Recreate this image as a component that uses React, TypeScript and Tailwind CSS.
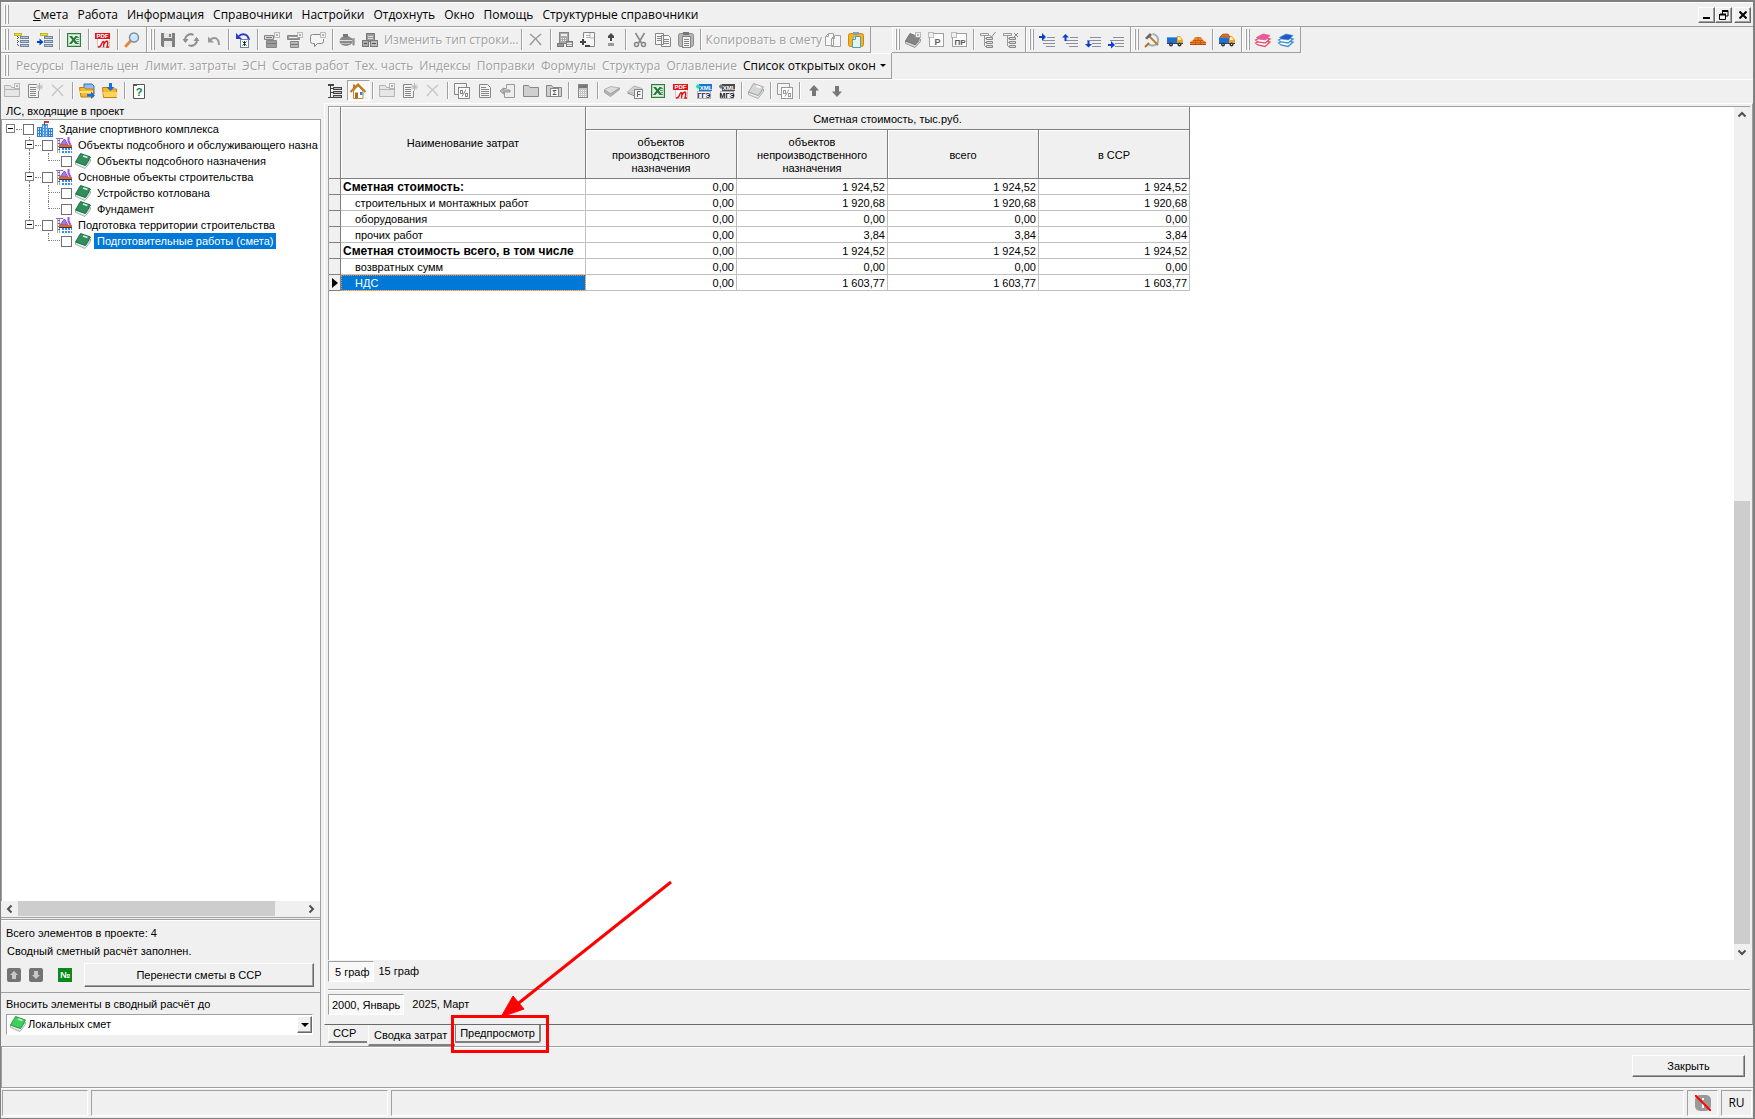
import type { ReactNode } from "react";

const G = "#868686";
const L = "#b4b4b4";

const sparkle = (
  <g stroke={L} fill="none">
    <rect x="10.5" y="0.5" width="5" height="5" fill="#f0f0f0" stroke={G} strokeDasharray="1 1" />
    <rect x="12.5" y="2.5" width="1" height="1" />
  </g>
);

const excel = (
  <>
    <rect x="1.5" y="1.5" width="13" height="13" fill="#fff" stroke="#2e7d3a" />
    <rect x="2.5" y="2.5" width="11" height="11" fill="#e3f1e5" stroke="#b9d8be" />
    <path d="M10 5.500h3M10 7.500h3M11 9.500h2M11 11.500h2" stroke="#5d9c68" />
    <path d="M3 4h3l1.700 2.300L9.500 4H12L9 7.800 12.500 12h-3l-2-2.600-2 2.600H3l3.300-4.200z" fill="#23793a" />
  </>
);

const pdf = (
  <>
    <path d="M2.500 1.500h9l3 3v11h-12z" fill="#fff" stroke="#c9c9c9" />
    <rect x="0" y="1" width="15" height="6" fill="#e3131a" />
    <text x="7.500" y="6" textAnchor="middle" fontSize="6" fontWeight="700" fontFamily="Liberation Sans, sans-serif" fill="#fff">PDF</text>
    <path d="M3 15c3 0 3-2 4-4s2-2 2 0-1 3 0 4M9 12c1-2 2-3 3-3s1 2 0 6h2" fill="none" stroke="#e3131a" strokeWidth="1.500" />
  </>
);

const xml = (band: string, dark: string, mark: string, label: string) => (
  <>
    <rect x="3" y="1" width="13" height="7" fill={band} />
    <rect x="1.5" y="8.5" width="13" height="7" fill="#f4f4f8" stroke={L} />
    <path d="M0 3.500h4M2 1.500v4" stroke={mark} strokeWidth="2" />
    <text x="10" y="6.500" textAnchor="middle" fontSize="6" fontWeight="700" fontFamily="Liberation Sans, sans-serif" fill="#fff">XML</text>
    <text x="8" y="14.500" textAnchor="middle" fontSize="7" fontWeight="700" fontFamily="Liberation Sans, sans-serif" fill={dark}>{label}</text>
  </>
);

const newDoc = (
  <>
    <path d="M10 1.500H1.500v13h10V8" fill="#f4f4f4" stroke={G} />
    <path d="M3 4.500h6M3 6.500h6M3 8.500h6M3 10.500h6M3 12.500h6" stroke={G} />
    <path d="M12.500 0v8M9 4h7M10 1.500l5 5M15 1.500l-5 5" stroke={L} />
  </>
);

const newFolder = (
  <>
    <path d="M0.500 13.500v-11h6l1 2h8v9z" fill="#e6e6e6" stroke={L} />
    <path d="M1 6.500h14" stroke={L} />
    {sparkle}
  </>
);

const cross = (c: string) => <path d="M2 2c4 3 8 7 11 11M13 2C9 5 5 9 2 13" stroke={c} strokeWidth="1.500" fill="none" />;

const book = (face: string, side: string, mark: string) => (
  <>
    <path d="M0.500 9v2.500L10 15.500l5.500-7V6l-5 6.500z" fill="#e6ecea" stroke="#93a19c" strokeWidth=".8" />
    <path d="M5.500 0.500l10 3.500-5 8.500-10-3.500z" fill={face} stroke={side} />
    <path d="M8 3l4.500 1.500" stroke={mark} strokeWidth="1.500" />
  </>
);

const stack = (top: string, side: string) => (
  <>
    <path d="M0.500 11l6-3 8.500 2-5 4.500-7-1.500z" fill="#fff" stroke={side} strokeWidth="1.300" />
    <path d="M0.500 8l6-3 8.500 2-5 4-7-1z" fill="#fff" stroke={side} strokeWidth="1.300" />
    <path d="M1.500 5.500L8 2l7 1.500L10.500 8 3.500 7z" fill={top} stroke={side} strokeWidth=".7" />
  </>
);

const treeBars = (
  <>
    <rect x="6.500" y="4.500" width="8" height="2" fill="#b9cadb" stroke="#6f849b" />
    <rect x="6.500" y="8.500" width="8" height="2" fill="#b9cadb" stroke="#6f849b" />
    <rect x="6.500" y="12.500" width="8" height="2" fill="#b9cadb" stroke="#6f849b" />
  </>
);

const lines = (first: string) => (
  <path d={first + "M4 8.500h12M4 11.500h12M7 14.500h9"} stroke="#8a8fa0" fill="none" />
);

const calc = (
  <>
    <rect x="3.500" y="1.500" width="9" height="13" fill="#c4c4c4" stroke={G} />
    <rect x="4" y="2" width="8" height="3" fill="#777" />
    <path d="M4 7.500h8M4 9.500h8M4 11.500h8M4 13.500h8" stroke="#fff" strokeDasharray="1 1" />
  </>
);

const truck = (
  <>
    <path d="M0 5h10v6H0z" fill="#1f6fd0" />
    <path d="M0 5.500h10" stroke="#5aa0ee" />
    <path d="M10 4h3l3 4v3h-6z" fill="#f1a325" />
    <path d="M11 5h2l1.500 3H11z" fill="#fbe9b8" />
    <path d="M0 11.500h16" stroke="#24486e" />
    <circle cx="4" cy="12.500" r="2" fill="#333" />
    <circle cx="12.500" cy="12.500" r="2" fill="#333" />
    <path d="M3.500 12.500h1M12 12.500h1" stroke="#ddd" />
  </>
);

const docPercent = (c: string) => (
  <>
    <path d="M4 11.500H0.500v-11h12V4" fill="#f4f4f4" stroke={c} />
    <rect x="4.500" y="4.500" width="11" height="11" fill="#fff" stroke={c} />
    <path d="M8 13.500l4-7" stroke={c} />
    <rect x="6.500" y="7.500" width="2" height="3" fill="none" stroke={c} />
    <rect x="11.500" y="10.500" width="2" height="3" fill="none" stroke={c} />
  </>
);

const icons: Record<string, ReactNode> = {
  tree: (
    <>
      {treeBars}
      <path d="M3.500 4v10M4 5.500h2M4 9.500h2M4 13.500h2" stroke="#555" strokeDasharray="1 1" />
      <rect x="0.500" y="1.500" width="7" height="2" fill="#ffe600" stroke="#a39a1a" strokeWidth=".7" />
    </>
  ),
  treeInto: (
    <>
      <g transform="translate(1 0)">{treeBars}</g>
      <rect x="3.500" y="1.500" width="7" height="2" fill="#ffe600" stroke="#a39a1a" strokeWidth=".7" />
      <path d="M0 10h4" stroke="#0044cc" strokeWidth="2" />
      <path d="M2.500 6.500L6.500 10l-4 3.500z" fill="#0044cc" />
    </>
  ),
  excel,
  pdf,
  magnifier: (
    <>
      <path d="M2 14l5-5.500" stroke="#e58a3c" strokeWidth="3" strokeLinecap="round" />
      <circle cx="10" cy="5.500" r="4.500" fill="#cfe4f8" stroke="#7d8ea5" strokeWidth="1.500" />
      <path d="M8 4.500a2.500 2.500 0 0 1 2.500-1.500" stroke="#fff" fill="none" />
    </>
  ),
  save: (
    <>
      <path d="M1 1h14v14H2.500L1 13.500z" fill="#7f7f7f" />
      <path d="M4 1h8v5H4zM4 9h8v6H4z" fill="#e6e6e6" />
      <path d="M9 2h2v3H9z" fill="#7f7f7f" />
    </>
  ),
  refresh: (
    <g fill="none" stroke="#8f8f8f" strokeWidth="2">
      <path d="M2.500 9.500a5.500 5.500 0 0 1 8-6.500M13.500 6.500a5.500 5.500 0 0 1-8 6.500" />
      <path d="M0 7l2.500 3.500L5 7M11 9l2.500-3.500L16 9" strokeWidth="1" fill="#8f8f8f" />
    </g>
  ),
  undo: (
    <>
      <path d="M4 8c4-4 9-2 9 5" fill="none" stroke="#999" strokeWidth="2" />
      <path d="M2 4.500v6h6z" fill="#999" />
    </>
  ),
  undoBlue: (
    <>
      <path d="M4 4c4-3 9-2 10 4" fill="none" stroke="#2f36c8" strokeWidth="2" />
      <path d="M1 1v6h6z" fill="#2f36c8" />
      <rect x="5.500" y="7.500" width="8" height="8" fill="#fff" stroke="#6688aa" />
      <path d="M7.500 9.500l4 4M11.500 9.500l-4 4M9.500 9v5" stroke="#333" />
    </>
  ),
  stackNew: (
    <>
      <path d="M0.500 3.500h9v4h-9z" fill="#d5d5d5" stroke={G} />
      <path d="M2.500 8.500h10v7h-10z" fill="#9b9b9b" stroke={G} />
      <path d="M2 5.500h6M3 11.500h9" stroke="#777" />
      {sparkle}
    </>
  ),
  barNew: (
    <>
      <path d="M0.500 3.500h12v4H0.500z" fill="#999" stroke={G} />
      <path d="M3.500 9.500h8v6h-8z" fill="#b7b7b7" stroke={G} />
      <path d="M2 5.500h9" stroke="#eee" />
      <path d="M4 12.500h7" stroke="#777" />
      {sparkle}
    </>
  ),
  commentNew: (
    <>
      <path d="M10 2.500H2.500q-2 0-2 2v5q0 2 2 2h2v3l3-3h4q2 0 2-2V7" fill="#f4f4f4" stroke={G} />
      {sparkle}
    </>
  ),
  barrel: (
    <>
      <ellipse cx="7" cy="9" rx="6.500" ry="5" fill="#8a8a8a" />
      <path d="M0 8.500h13" stroke="#ddd" />
      <path d="M2 11.500h9" stroke="#bbb" />
      <path d="M12 7h2v6h1V6" stroke="#777" fill="none" />
      <rect x="4" y="2" width="5" height="3" fill="#777" />
    </>
  ),
  machines: (
    <>
      <rect x="4.500" y="1.500" width="8" height="8" fill="#999" stroke="#777" />
      <path d="M6 4.500h5M6 6.500h5" stroke="#ddd" />
      <rect x="0.500" y="8.500" width="6" height="6" fill="#aaa" stroke="#777" />
      <rect x="8.500" y="8.500" width="7" height="6" fill="#bbb" stroke="#777" />
      <path d="M10 11.500h4M2 11.500h3" stroke="#555" />
    </>
  ),
  cross: cross("#999"),
  crossLight: cross("#c6c6c6"),
  calcDb: (
    <>
      <rect x="2.500" y="0.500" width="9" height="11" fill="#aaa" stroke={G} />
      <path d="M4 3h6" stroke="#eee" strokeWidth="2" />
      <path d="M4 6.500h6M4 8.500h6" stroke="#eee" strokeDasharray="1 1" />
      <rect x="0.500" y="11.500" width="6" height="3" fill="#999" stroke="#777" />
      <rect x="9.500" y="9.500" width="6" height="5" fill="#aaa" stroke="#777" />
      <path d="M10 11.500h5M10 13.500h5" stroke="#eee" />
    </>
  ),
  docPlus: (
    <>
      <path d="M3.500 6V0.500h11v14H10" fill="#f6f6f6" stroke={G} />
      <path d="M6 3.500h4M6 5.500h4M10 1v5h4" stroke={L} fill="none" />
      <path d="M0 10h6M3 7v6" stroke="#444" strokeWidth="2" />
      <path d="M5 14h5" stroke="#444" strokeWidth="2" />
    </>
  ),
  plusMinus: (
    <>
      <path d="M8 1l3 3v2H9v3H7V6H5V4z" fill="#4a4a4a" />
      <rect x="5" y="11" width="6" height="3" fill="#999" />
    </>
  ),
  scissors: (
    <g fill="none" stroke={G}>
      <path d="M3.500 1l6 10M12.500 1l-6 10" strokeWidth="1.500" />
      <circle cx="4.500" cy="12.500" r="2" strokeWidth="1.500" />
      <circle cx="11.500" cy="12.500" r="2" strokeWidth="1.500" />
    </g>
  ),
  copy: (
    <g stroke={G} fill="#f6f6f6">
      <path d="M0.500 1.500h8v11h-8zM6.500 3.500h7l2 2v9h-9z" />
      <path d="M2 4.500h4M2 6.500h4M2 8.500h4M8 7.500h6M8 9.500h6M8 11.500h6" />
    </g>
  ),
  paste: (
    <>
      <rect x="0.500" y="1.500" width="15" height="13" rx="2" fill="#b5b5b5" stroke="#8c8c8c" />
      <rect x="5" y="0" width="6" height="3" fill="#777" />
      <rect x="4.500" y="4.500" width="8" height="11" fill="#f2f2f2" stroke={G} />
      <path d="M6 7.500h5M6 9.500h5M6 11.500h5M6 13.500h5" stroke={G} />
    </>
  ),
  copyBlank: (
    <g stroke="#a2a2a2" fill="#f7f7f7">
      <path d="M3.500 1.500h5v12h-8V4.500zM9.500 3.500h6v11h-9v-8z" />
      <path d="M3.500 2v2.500H1M9.500 4v2.500H7" fill="none" />
    </g>
  ),
  pasteColor: (
    <>
      <rect x="0.500" y="1.500" width="15" height="13" rx="2" fill="#f8b21d" stroke="#c98a10" />
      <rect x="5" y="0" width="6" height="3" fill="#8aa0ae" />
      <path d="M7 4.500h5.500v11h-8V7z" fill="#dff5f8" stroke="#5f9aa6" />
      <path d="M7.500 4.500v3h-3" stroke="#5f9aa6" fill="none" />
    </>
  ),
  bookNew: (
    <>
      <path d="M0.500 9v2.500L10 15.500l5.500-6V7l-5 6z" fill="#d6d6d6" stroke="#999" />
      <path d="M5 1.500l10 4-4.500 7L0.500 9z" fill="#858585" stroke="#777" />
      {sparkle}
    </>
  ),
  boxP: (
    <>
      <rect x="1.500" y="1.500" width="14" height="13" fill="#fdfdfd" stroke="#a0a0a0" />
      <rect x="0.500" y="0.500" width="5" height="5" fill="#f0f0f0" stroke={G} strokeDasharray="1 1" />
      <text x="9.500" y="13" textAnchor="middle" fontSize="9" fontWeight="700" fontFamily="Liberation Sans, sans-serif" fill="#666">Р</text>
    </>
  ),
  boxPR: (
    <>
      <rect x="1.500" y="1.500" width="14" height="13" fill="#fdfdfd" stroke="#a0a0a0" />
      <rect x="0.500" y="0.500" width="5" height="5" fill="#f0f0f0" stroke={G} strokeDasharray="1 1" />
      <text x="9" y="13" textAnchor="middle" fontSize="8" fontWeight="700" fontFamily="Liberation Sans, sans-serif" fill="#555">ПР</text>
    </>
  ),
  treeCheck: (
    <>
      <path d="M0.500 1.500h8v2h-8zM4.500 4v10M5 6.500h2M5 10.500h2M5 14.500h2" stroke="#999" fill="none" />
      <path d="M6.500 5.500h6v2h-6zM6.500 9.500h6v2h-6zM6.500 13.500h6v2h-6z" fill="#e0e0e0" stroke={G} />
      <path d="M9.500 3l2 2 4-5" stroke={G} fill="none" />
    </>
  ),
  treeCross: (
    <>
      <path d="M0.500 1.500h8v2h-8zM4.500 4v10M5 6.500h2M5 10.500h2M5 14.500h2" stroke="#999" fill="none" />
      <path d="M6.500 5.500h6v2h-6zM6.500 9.500h6v2h-6zM6.500 13.500h6v2h-6z" fill="#e0e0e0" stroke={G} />
      <path d="M11 1l4 4M15 1l-4 4" stroke={G} />
    </>
  ),
  insRight: (
    <>
      {lines("M8 5.500h8")}
      <path d="M0 4h3V1l4 4-4 4V6H0z" fill="#0a3fd0" />
    </>
  ),
  insUp: (
    <>
      {lines("M8 5.500h8")}
      <path d="M3.500 2L7 5.500H4.500V9h-2V5.500H0z" fill="#0a3fd0" />
    </>
  ),
  insDown: (
    <>
      <path d="M5 5.500h11M2 8.500h14M7 11.500h9M7 14.500h9" stroke="#8a8fa0" />
      <path d="M2.500 9h2v3H7l-3.500 3.500L0 12h2.500z" fill="#0a3fd0" />
    </>
  ),
  insBottom: (
    <>
      <path d="M5 5.500h11M2 8.500h14M7 11.500h9M7 14.500h9" stroke="#8a8fa0" />
      <path d="M0 12h3V9l4 4-4 3.500V14H0z" fill="#0a3fd0" />
    </>
  ),
  hammer: (
    <>
      <path d="M8.500 2c7 1 7 9 2.500 11-3 1-6 0-7.500-1.500" fill="none" stroke="#9fb3b8" strokeWidth="2" />
      <path d="M5 4l9 9" stroke="#c07a33" strokeWidth="2" />
      <path d="M1 6l5-5 2 2-5 4.500z" fill="#666" />
      <path d="M1 15l4-4" stroke="#b0702c" strokeWidth="2" />
    </>
  ),
  truck,
  bricks: (
    <>
      <path d="M5 5h6l2 3 3 2v3H0v-3l3-2z" fill="#f0862a" />
      <path d="M3 8.500h10M0 10.500h16M5.500 9v4M10.500 9v4M8 5v3" stroke="#c9560f" />
      <path d="M0 12.500h16" stroke="#b5480f" />
    </>
  ),
  truckLoaded: (
    <>
      {truck}
      <path d="M1 5l3-3h5l2 3z" fill="#e5701b" stroke="#a9440d" strokeWidth=".7" />
    </>
  ),
  stackPink: stack("#e85aa8", "#e0506a"),
  stackBlue: stack("#2456c8", "#3f8fd0"),
  newFolder,
  newDoc,
  foldersGo: (
    <>
      <path d="M5 1h8l2 2v8H5z" fill="#8fbcf0" stroke="#3b6eb5" />
      <path d="M0.500 4.500h5l1 1.500h8v8H2z" fill="#f9b826" stroke="#c27f0b" />
      <path d="M1 8h13v2H1z" fill="#ffe08a" />
      <path d="M8 11h4V8.500l4 3.700-4 3.800v-2.500H8z" fill="#1b6fd8" />
    </>
  ),
  folderDown: (
    <>
      <path d="M0.500 4.500h5l1 1.500h8v8.500h-13z" fill="#f9b826" stroke="#c27f0b" />
      <path d="M1 9h14v5H2z" fill="#ffd35c" />
      <path d="M7 0h3v4h2.500L8.500 8 4.500 4H7z" fill="#1b6fd8" />
    </>
  ),
  help: (
    <>
      <path d="M2.500 1.500h11v14h-11z" fill="#fff" stroke="#555" />
      <path d="M2 1h4v2H2z" fill="#555" />
      <text x="8" y="13" textAnchor="middle" fontSize="11" fontWeight="700" fontFamily="Liberation Sans, sans-serif" fill="#16803a">?</text>
    </>
  ),
  outline: (
    <g stroke="#444" fill="#bbb">
      <path d="M3.500 3v11M1 1.500h6M1 14.500h5M4 5.500h3M4 9.500h3" />
      <path d="M1 2.500h6" />
      <rect x="6.500" y="4.500" width="8" height="2" />
      <rect x="6.500" y="8.500" width="8" height="2" />
      <rect x="6.500" y="12.500" width="8" height="2" />
    </g>
  ),
  house: (
    <>
      <path d="M3.500 8v7.500h9.500V8L8 3z" fill="#fff" stroke="#c58a3c" />
      <path d="M3 1.500h2V6L3 8z" fill="#c8781e" />
      <path d="M0.500 9L8 1.500 15.500 9" fill="none" stroke="#c07a1f" strokeWidth="2" />
      <rect x="5" y="9.500" width="3" height="6" fill="#b36a1c" />
      <rect x="10" y="9" width="2.500" height="3" fill="#3d7fe0" />
    </>
  ),
  docPercent: docPercent(G),
  docPercent2: docPercent("#999"),
  doc: (
    <g stroke={G}>
      <path d="M2.500 1.500h8l3 3v10h-11z" fill="#f4f4f4" />
      <path d="M4 4.500h5M4 6.500h8M4 8.500h8M4 10.500h8M4 12.500h8" />
    </g>
  ),
  docBack: (
    <g stroke="#999">
      <path d="M6.500 1.500h8v13h-10V9" fill="#ededed" />
      <path d="M6.500 1.500v4h-3" fill="none" />
      <path d="M0 8l3.500-3v2H10v2H3.500v2z" fill="#bbb" />
    </g>
  ),
  folder: <path d="M0.500 13.500v-11h5l1.500 2h8.500v9z" fill="#cfcfcf" stroke={G} />,
  folderSum: (
    <>
      <path d="M0.500 13.500v-11h5l1.500 2h8.500v9z" fill="#cfcfcf" stroke={G} />
      <rect x="4.500" y="5.500" width="8" height="8" fill="#fff" stroke={G} />
      <path d="M10.500 7.500H7l2 2-2 2h3.500" fill="none" stroke="#555" />
    </>
  ),
  calc,
  bookCheck: (
    <>
      <path d="M0.500 6.500l6-3 9 1.500-9 6z" fill="#dcdcdc" stroke={L} />
      <path d="M0.500 7v2.500l6 4 9-7V5l-9 6z" fill="#b3b3b3" stroke="#a5a5a5" />
    </>
  ),
  bookF: (
    <>
      <path d="M0.500 9L7 3l8 2.500-5 6z" fill="#d2d2d2" stroke={L} />
      <path d="M0.500 10L8 13" stroke={G} />
      <rect x="7.500" y="6.500" width="8" height="9" fill="#f4f4f4" stroke={G} />
      <path d="M10.500 14V8.500h3M10.500 11.500h3" stroke="#666" fill="none" />
    </>
  ),
  xmlGge: xml("#1478d2", "#2b1f4a", "#14e6a0", "ГГЭ"),
  xmlMge: xml("#4a4a4a", "#111", "#777", "МГЭ"),
  bookGray: book("#d6d6d6", "#a8a8a8", "#fff"),
  up: <path d="M8 2l5 5.500h-3V13H6V7.500H3z" fill="#777" />,
  down: <path d="M8 14l5-5.500h-3V3H6v5.500H3z" fill="#777" />,
  city: (
    <>
      <path d="M0 6h5v10H0zM11 7h5v9h-5z" fill="#2f7fd6" />
      <path d="M5 3h6v13H5z" fill="#4a94e4" />
      <path d="M1.500 7v8M3.500 7v8M12.500 8v7M14.500 8v7M6.500 5v10M9.500 5v10" stroke="#cfe6ff" strokeDasharray="2 1" />
      <path d="M7.500 0v4" stroke="#555" />
      <path d="M8 0h4v2H8z" fill="#e33" />
    </>
  ),
  site: (
    <>
      <path d="M1.500 1v15M3.500 1v15" stroke="#a9a9b4" />
      <path d="M2 3.500h2M2 6.500h2M2 9.500h2M2 12.500h2" stroke="#666" />
      <path d="M0 1.500h3M3 1.500h4" stroke="#9a5be0" />
      <path d="M4 8l4.500-6L12 8z" fill="#a678e0" stroke="#7b4bc0" />
      <path d="M12.500 0v4l2 4" stroke="#a04fe6" strokeWidth="2" fill="none" />
      <rect x="3" y="8" width="13" height="2" fill="#e0662a" />
      <path d="M3 10.500h13" stroke="#5a2b22" />
      <rect x="6" y="11" width="10" height="5" fill="#2f8fff" />
      <path d="M6 13.500h10M8.500 11v5M11.500 11v5M14.500 11v5" stroke="#fff" />
    </>
  ),
  bookGreen: book("#2f8f5c", "#237048", "#d9f5e4"),
  bookLime: book("#43cf5d", "#259a3f", "#b8ffc4"),
};

function Icon({ name }: { name: string }) {
  return (
    <svg viewBox="0 0 16 16" className="size-4 shrink-0 overflow-visible" aria-hidden="true">
      {icons[name]}
    </svg>
  );
}

function Sep() {
  return (
    <span className="flex w-[6px] shrink-0 justify-center py-[2px]">
      <span className="border-r border-l border-r-white border-l-[#a0a0a0]" />
    </span>
  );
}

function Grip() {
  return (
    <span className="flex w-[10px] shrink-0 justify-center gap-px py-[2px]">
      <span className="w-[2px] border-r border-l border-r-[#a0a0a0] border-l-white" />
      <span className="w-[2px] border-r border-l border-r-[#a0a0a0] border-l-white" />
    </span>
  );
}

// "|" is a separator, a leading "~" is a disabled text button
function Tools({ items, pressed }: { items: string[]; pressed?: string }) {
  return (
    <>
      {items.map((item, i) => {
        if (item === "|") return <Sep key={i} />;
        if (item.startsWith("~"))
          return (
            <button key={i} type="button" className="shrink-0 pl-[2px] text-left whitespace-nowrap text-[#a0a0a0] [text-shadow:1px_1px_0_#fff]">
              {item.slice(1)}
            </button>
          );
        return (
          <button
            key={i}
            type="button"
            aria-label={item}
            className={
              item === pressed
                ? "flex w-[23px] shrink-0 items-center border border-t-[#a0a0a0] border-r-white border-b-white border-l-[#a0a0a0] bg-[#f8f8f8] pt-px pl-[2px]"
                : "flex w-[23px] shrink-0 items-center pt-px pl-[3px]"
            }
          >
            <Icon name={item} />
          </button>
        );
      })}
    </>
  );
}

function ToolGroup({ items }: { items: string[] }) {
  return (
    <div className="flex shrink-0 border-r border-b border-[#a0a0a0] pr-[2px] shadow-[inset_1px_1px_0_#fff]">
      <Grip />
      <Tools items={items} />
    </div>
  );
}

const menu = ["Работа", "Информация", "Справочники", "Настройки", "Отдохнуть", "Окно", "Помощь", "Структурные справочники"];

const panels = ["Ресурсы", "Панель цен", "Лимит. затраты", "ЭСН", "Состав работ", "Тех. часть", "Индексы", "Поправки", "Формулы", "Структура", "Оглавление"];

type Node = { level: number; icon: string; label: string; last?: boolean; parentLast?: boolean; selected?: boolean };

const nodes: Node[] = [
  { level: 0, icon: "city", label: "Здание спортивного комплекса", last: true },
  { level: 1, icon: "site", label: "Объекты подсобного и обслуживающего назна" },
  { level: 2, icon: "bookGreen", label: "Объекты подсобного назначения", last: true },
  { level: 1, icon: "site", label: "Основные объекты строительства" },
  { level: 2, icon: "bookGreen", label: "Устройство котлована" },
  { level: 2, icon: "bookGreen", label: "Фундамент", last: true },
  { level: 1, icon: "site", label: "Подготовка территории строительства", last: true },
  { level: 2, icon: "bookGreen", label: "Подготовительные работы (смета)", last: true, parentLast: true, selected: true },
];

function TreeRow({ node }: { node: Node }) {
  return (
    <li className="flex h-4 items-center pl-1 whitespace-nowrap">
      {node.level > 0 && <span className="w-[19px] shrink-0" />}
      {node.level > 1 && (
        <span className="flex h-4 w-[19px] shrink-0 pl-1">
          {!node.parentLast && <span className="border-l border-dotted border-[#808080]" />}
        </span>
      )}
      {node.level < 2 ? (
        <span className="flex w-[17px] shrink-0 items-center">
          <span className="flex h-4 w-[9px] flex-col items-center">
            <span className={node.level ? "h-[3px] border-l border-dotted border-[#808080]" : "h-[3px]"} />
            <button type="button" aria-label={"Свернуть: " + node.label} className="flex size-[9px] items-center justify-center border border-[#808080] bg-white">
              <span className="h-px w-[5px] bg-black" />
            </button>
            {!node.last && <span className="h-1 border-l border-dotted border-[#808080]" />}
          </span>
          <span className="ml-px w-[6px] border-t border-dotted border-[#808080]" />
        </span>
      ) : (
        <span className="flex h-4 w-[17px] shrink-0 pl-1">
          <span className={node.last ? "h-2 border-l border-dotted border-[#808080]" : "h-4 border-l border-dotted border-[#808080]"}>
            <span className="block h-2 w-[11px] border-b border-dotted border-[#808080]" />
          </span>
        </span>
      )}
      <label className="flex items-center">
        <input type="checkbox" className="mr-[3px] size-[11px] shrink-0 appearance-none border border-[#707070] bg-white" />
        <Icon name={node.icon} />
        <span className={node.selected ? "ml-[3px] bg-[#0078d7] px-[3px] leading-4 text-white" : "ml-[3px] px-[3px] leading-4"}>
          {node.label}
        </span>
      </label>
    </li>
  );
}

const rows: [string, string, string, string?][] = [
  ["Сметная стоимость:", "0,00", "1 924,52", "b"],
  ["строительных и монтажных работ", "0,00", "1 920,68"],
  ["оборудования", "0,00", "0,00"],
  ["прочих работ", "0,00", "3,84"],
  ["Сметная стоимость всего, в том числе", "0,00", "1 924,52", "b"],
  ["возвратных сумм", "0,00", "0,00"],
  ["НДС", "0,00", "1 603,77", "s"],
];

const th = "border-r border-b border-[#808080] bg-[#f0f0f0] p-0 pt-[2px] text-center font-normal leading-[13px] shadow-[inset_1px_1px_0_#fff]";
const td = "border-r border-b border-[#c0c0c0] p-0 pt-px pr-[2px] text-right leading-[14px]";

function nameCell(kind?: string) {
  if (kind === "b") return "border-r border-b border-[#c0c0c0] p-0 pt-px pl-[2px] text-left text-xs leading-[14px] font-bold whitespace-nowrap";
  if (kind === "s")
    return "border-r border-b border-[#c0c0c0] bg-[#0078d7] p-0 pt-px pl-[14px] text-left leading-[14px] font-normal text-white outline-1 -outline-offset-1 outline-dotted outline-[#ff8728]";
  return "border-r border-b border-[#c0c0c0] p-0 pt-px pl-[14px] text-left leading-[14px] font-normal";
}

function CostTable() {
  return (
    <table className="w-[861px] table-fixed border-separate border-spacing-0">
      <colgroup>
        <col className="w-3" />
        <col className="w-[245px]" />
        <col span={4} className="w-[151px]" />
      </colgroup>
      <thead>
        <tr className="h-[23px]">
          <td rowSpan={2} className={th} />
          <th rowSpan={2} className={th}>Наименование затрат</th>
          <th colSpan={4} className={th}>Сметная стоимость, тыс.руб.</th>
        </tr>
        <tr className="h-[49px]">
          <th className={th}>объектов<br />производственного<br />назначения</th>
          <th className={th}>объектов<br />непроизводственного<br />назначения</th>
          <th className={th}>всего</th>
          <th className={th}>в ССР</th>
        </tr>
      </thead>
      <tbody>
        {rows.map(([name, a, b, kind]) => (
          <tr key={name} className="h-4">
            <td className="border-r border-b border-[#808080] bg-[#f0f0f0] p-0">
              {kind === "s" && (
                <svg viewBox="0 0 6 10" className="ml-[3px] h-[10px] w-[6px]" aria-hidden="true">
                  <path d="M0 0l6 5-6 5z" />
                </svg>
              )}
            </td>
            <th scope="row" className={nameCell(kind)}>{name}</th>
            <td className={td}>{a}</td>
            <td className={td}>{b}</td>
            <td className={td}>{b}</td>
            <td className={td}>{b}</td>
          </tr>
        ))}
      </tbody>
    </table>
  );
}

function Chevron({ turn }: { turn: string }) {
  return (
    <svg viewBox="0 0 16 16" className={"size-4 shrink-0 " + turn} aria-hidden="true">
      <path d="M4.500 9.500L8 6l3.500 3.500" fill="none" stroke="#505050" strokeWidth="2" />
    </svg>
  );
}

const raised = "border border-t-white border-r-[#696969] border-b-[#696969] border-l-white shadow-[inset_-1px_-1px_0_#a0a0a0]";
const sunken = "border border-t-[#a0a0a0] border-r-white border-b-white border-l-[#a0a0a0]";

function MenuBar() {
  return (
    <nav className="flex h-[25px] shrink-0 border-t border-b border-t-white border-b-[#a0a0a0] font-['Open_Sans',sans-serif] text-xs">
      <Grip />
      <div className="ml-[22px] flex gap-[9px]">
        <button type="button"><u>С</u>мета</button>
        {menu.map((m) => (
          <button key={m} type="button" className="whitespace-nowrap">{m}</button>
        ))}
      </div>
      <div className="ml-auto flex items-center pr-[2px]">
        <button type="button" aria-label="Свернуть" className={"flex h-4 w-[17px] items-end justify-center pb-[3px] " + raised}>
          <span className="h-[2px] w-[7px] bg-black" />
        </button>
        <button type="button" aria-label="Восстановить" className={"flex h-4 w-[17px] items-center justify-center " + raised}>
          <svg viewBox="0 0 10 10" className="size-[10px]" aria-hidden="true">
            <path d="M3 1h6M1 4.500h6" stroke="#000" strokeWidth="2" />
            <path d="M3.500 1v3M9 .500v5.500H7M.500 4v5.500h6V4" fill="none" stroke="#000" />
          </svg>
        </button>
        <button type="button" aria-label="Закрыть окно" className={"ml-[2px] flex h-4 w-[17px] items-center justify-center " + raised}>
          <svg viewBox="0 0 8 8" className="size-2" aria-hidden="true">
            <path d="M.500.500l7 7M7.500.500l-7 7" stroke="#000" strokeWidth="2" />
          </svg>
        </button>
      </div>
    </nav>
  );
}

function ProjectPane() {
  return (
    <aside className="flex w-[320px] shrink-0 flex-col">
      <div className="flex h-6 shrink-0 pb-[3px]">
        <Tools items={["newFolder", "newDoc", "crossLight", "|", "foldersGo", "folderDown", "|", "help"]} />
      </div>
      <div className="h-[15px] shrink-0 pl-[5px] leading-[15px]">ЛС, входящие в проект</div>
      <div className="flex min-h-0 flex-1 flex-col border-t border-r border-[#a0a0a0]">
        <ul className="min-h-0 flex-1 overflow-hidden border-l border-[#a0a0a0] bg-white pt-px">
          {nodes.map((n) => (
            <TreeRow key={n.label} node={n} />
          ))}
        </ul>
        <div className="flex h-[17px] shrink-0 items-start border-b border-[#a0a0a0] px-px">
          <Chevron turn="-rotate-90" />
          <div className="flex h-[15px] flex-1">
            <span className="h-full w-[90%] bg-[#cdcdcd]" />
          </div>
          <Chevron turn="rotate-90" />
        </div>
        <div className="mt-px shrink-0 border-t border-[#a0a0a0] pb-[11px] shadow-[inset_0_1px_0_#fff]">
          <p className="mt-1 pl-[5px] leading-[18px]">Всего элементов в проекте: 4</p>
          <p className="pl-[6px] leading-[18px]">Сводный сметный расчёт заполнен.</p>
          <div className="mt-[3px] flex h-6 items-center pr-[6px] pl-[6px]">
            <button type="button" aria-label="Вверх" className="mr-2 flex size-[14px] items-center justify-center rounded-[2px] bg-[#747474]">
              <svg viewBox="0 0 10 10" className="size-[10px]" aria-hidden="true"><path d="M5 1l4 4H7v4H3V5H1z" fill="#c8c8c8" /></svg>
            </button>
            <button type="button" aria-label="Вниз" className="mr-[15px] flex size-[14px] items-center justify-center rounded-[2px] bg-[#747474]">
              <svg viewBox="0 0 10 10" className="size-[10px]" aria-hidden="true"><path d="M5 9l4-4H7V1H3v4H1z" fill="#c8c8c8" /></svg>
            </button>
            <button type="button" className="mr-3 size-[14px] bg-[#0b8a1c] text-center text-[9px] leading-[14px] font-bold text-white">№</button>
            <button type="button" className={"h-6 flex-1 " + raised}>Перенести сметы в ССР</button>
          </div>
          <div className="mt-[5px] border-t border-[#a0a0a0] shadow-[inset_0_1px_0_#fff]" />
          <label htmlFor="level" className="mt-[2px] block pl-[5px] leading-[18px]">Вносить элементы в сводный расчёт до</label>
          <div className={"relative mr-[7px] ml-[5px] mt-px flex h-[21px] items-center bg-white " + sunken}>
            <select id="level" className="h-full w-full appearance-none bg-transparent pl-[21px] outline-none">
              <option>Локальных смет</option>
            </select>
            <span className="pointer-events-none absolute top-px left-[3px]"><Icon name="bookLime" /></span>
            <span className={"pointer-events-none absolute top-px right-0 flex h-[17px] w-[15px] items-center justify-center bg-[#f0f0f0] " + raised}>
              <svg viewBox="0 0 8 4" className="h-1 w-2" aria-hidden="true"><path d="M0 0h8L4 4z" /></svg>
            </span>
          </div>
        </div>
      </div>
    </aside>
  );
}

function Callout() {
  return (
    <>
      <span className="pointer-events-none absolute -top-[10px] -left-1 h-[38px] w-[98px] border-[3px] border-[#ff0000]" />
      <svg viewBox="0 0 190 140" className="pointer-events-none absolute bottom-[25px] left-[40px] h-[140px] w-[190px]" aria-hidden="true">
        <path d="M176 4L20 128" stroke="#f00" strokeWidth="3" />
        <path d="M6 139L18 118 29 131z" fill="#f00" stroke="#f00" />
      </svg>
    </>
  );
}

function CostPane() {
  return (
    <main className="ml-[3px] flex min-w-0 flex-1 flex-col">
      <div className="flex h-[23px] shrink-0 pb-[2px]">
        <Tools
          pressed="house"
          items={[
            "outline", "house", "|", "newFolder", "newDoc", "crossLight", "|", "docPercent", "doc", "docBack", "folder", "folderSum", "|",
            "calc", "|", "bookCheck", "bookF", "excel", "pdf", "xmlGge", "xmlMge", "|", "bookGray", "|", "docPercent2", "|", "up", "down",
          ]}
        />
      </div>
      <div className="flex min-h-0 flex-1 flex-col border border-t-white border-r-[#a0a0a0] border-b-[#696969] border-l-white pt-[2px] pr-[2px] pl-[3px]">
        <div className="flex min-h-0 flex-1 border-t border-l border-[#a0a0a0] bg-white">
          <div className="min-w-0 flex-1 overflow-hidden">
            <CostTable />
          </div>
          <div className="flex w-4 shrink-0 flex-col bg-[#f0f0f0]">
            <Chevron turn="" />
            <div className="flex flex-1 flex-col">
              <span className="h-[46%]" />
              <span className="flex-1 bg-[#cdcdcd]" />
            </div>
            <Chevron turn="rotate-180" />
          </div>
        </div>
        <div className="flex h-[30px] shrink-0 items-start border-b border-[#a0a0a0]">
          <button type="button" className={"mt-px h-[21px] bg-[#f8f8f8] pt-px pr-1 pl-[6px] " + sunken}>5 граф</button>
          <button type="button" className="mt-px h-[21px] px-1">15 граф</button>
        </div>
        <div className="flex h-[34px] shrink-0 items-start border-t border-white pt-[3px]">
          <button type="button" className={"h-[21px] bg-[#f8f8f8] px-[3px] pt-px " + sunken}>2000, Январь</button>
          <button type="button" className="ml-1 h-[21px] px-1">2025, Март</button>
        </div>
      </div>
      <div className="flex h-[21px] shrink-0 items-start pl-1">
        <button type="button" className="h-[18px] w-[39px] border-b-2 border-l border-b-[#808080] border-l-white pl-1 text-left leading-4">ССР</button>
        <button type="button" className="ml-px h-[21px] w-[87px] border-b-2 border-l border-b-[#808080] border-l-white bg-[#f0f0f0] pl-[5px] text-left whitespace-nowrap leading-[21px]">
          Сводка затрат
        </button>
        <div className="relative">
          <button type="button" className="h-[18px] w-[86px] rounded-br-[3px] border-r-2 border-b-2 border-l border-[#808080] leading-4">Предпросмотр</button>
          <Callout />
        </div>
      </div>
    </main>
  );
}

export default function App() {
  return (
    <div className="flex h-screen flex-col overflow-hidden border-t-2 border-r-2 border-b border-l border-[#808080] bg-[#f0f0f0] font-['Liberation_Sans',sans-serif] text-[11px] text-black">
      <MenuBar />
      <div className="flex h-[26px] shrink-0 font-['Open_Sans',sans-serif] text-xs">
        <ToolGroup items={["tree", "treeInto", "|", "excel", "|", "pdf", "|", "magnifier"]} />
        <ToolGroup
          items={[
            "save", "refresh", "undo", "|", "undoBlue", "|", "stackNew", "barNew", "commentNew", "|", "barrel", "machines",
            "~Изменить тип строки...", "|", "cross", "|", "calcDb", "docPlus", "plusMinus", "|", "scissors", "copy", "paste", "|",
            "~Копировать в смету", "copyBlank", "pasteColor",
          ]}
        />
        <div className="ml-[21px] flex">
          <ToolGroup items={["bookNew", "boxP", "boxPR", "|", "treeCheck", "treeCross"]} />
          <ToolGroup items={["insRight", "insUp", "insDown", "insBottom"]} />
          <ToolGroup items={["hammer", "truck", "bricks", "|", "truckLoaded"]} />
          <ToolGroup items={["stackPink", "stackBlue"]} />
        </div>
      </div>
      <div className="flex h-[26px] shrink-0 font-['Open_Sans',sans-serif] text-xs">
        <div className="flex border-r border-b border-[#a0a0a0] shadow-[inset_0_1px_0_#fff]">
          <Grip />
          <div className="flex gap-[6px] px-[5px]">
            {panels.map((p) => (
              <button key={p} type="button" className="whitespace-nowrap text-[#a0a0a0] [text-shadow:1px_1px_0_#fff]">{p}</button>
            ))}
            <button type="button" className="flex items-center gap-1 whitespace-nowrap">
              Список открытых окон
              <svg viewBox="0 0 6 3" className="h-[3px] w-[6px]" aria-hidden="true"><path d="M0 0h6L3 3z" /></svg>
            </button>
          </div>
        </div>
      </div>
      <div className="flex min-h-0 flex-1 border-t border-white">
        <ProjectPane />
        <CostPane />
      </div>
      <div className="flex h-[42px] shrink-0 items-center justify-end border-t border-b border-l border-[#a0a0a0] pr-2 pb-[2px] shadow-[inset_0_1px_0_#fff]">
        <button type="button" className={"h-[22px] w-[113px] " + raised}>Закрыть</button>
      </div>
      <footer className="flex h-[30px] shrink-0 gap-[3px] border-t border-white px-px pt-px pb-[2px] font-['Open_Sans',sans-serif] text-xs">
        <span className={"w-[86px] " + sunken} />
        <span className={"w-[297px] " + sunken} />
        <span className={"flex-1 " + sunken} />
        <span className={"flex w-[31px] items-center justify-center " + sunken}>
          <svg viewBox="0 0 16 16" className="size-4" aria-hidden="true">
            <rect width="16" height="16" rx="5" fill="#999" />
            <path d="M8 3v2M8 7v6" stroke="#fff" strokeWidth="2" />
            <path d="M0 0l16 16" stroke="#f00" strokeWidth="2" />
          </svg>
        </span>
        <span className={"flex w-[31px] items-center justify-center " + sunken}>RU</span>
      </footer>
    </div>
  );
}
